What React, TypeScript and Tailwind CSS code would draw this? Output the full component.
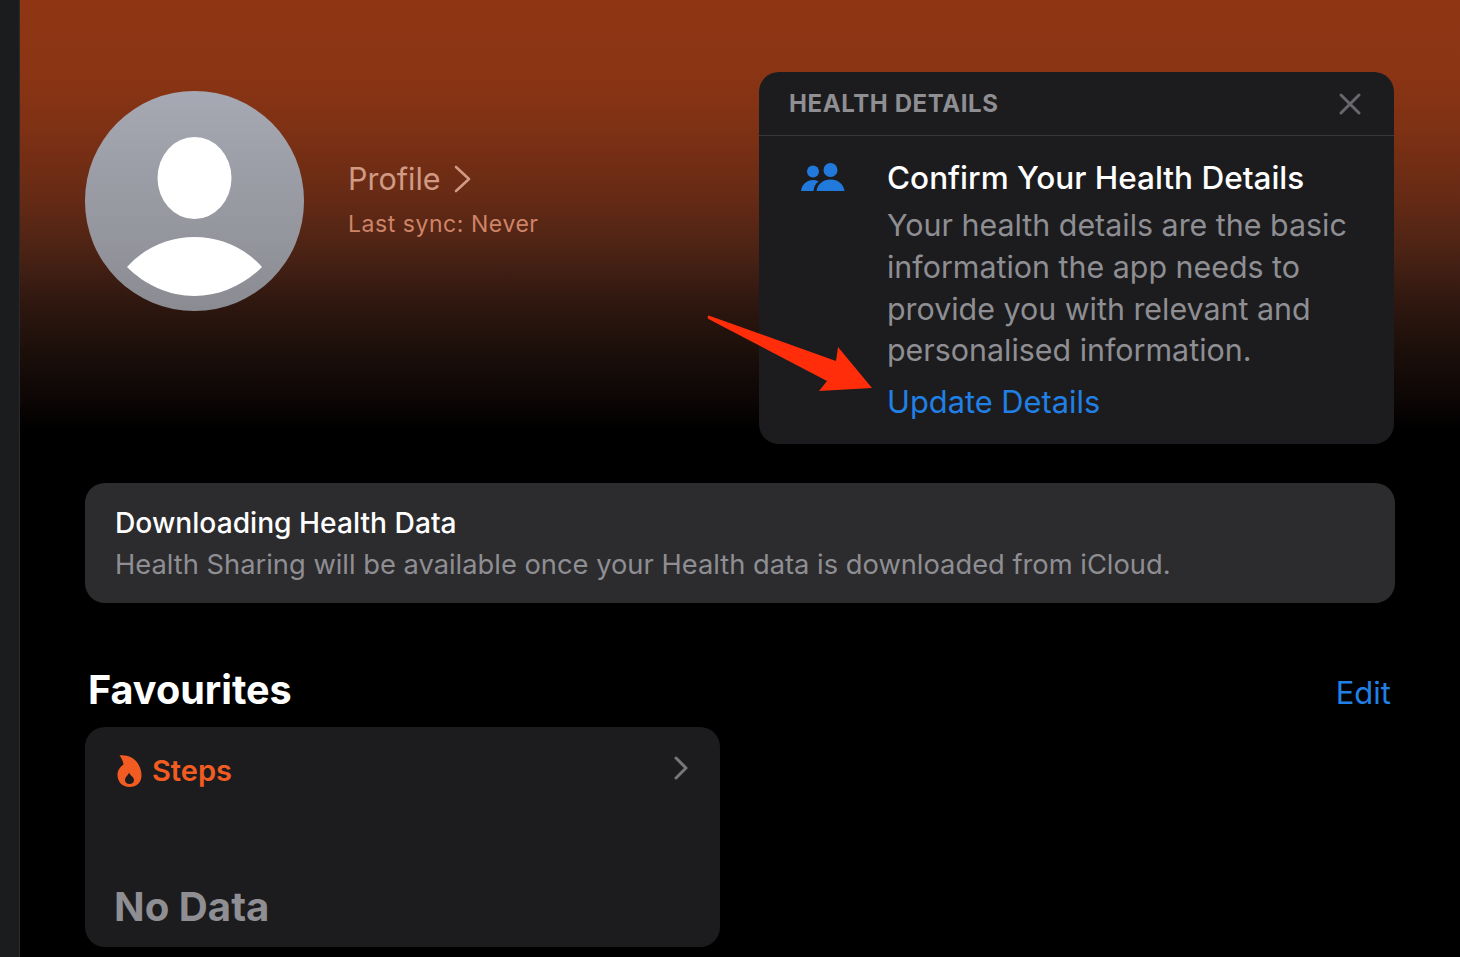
export default function App() {
  return (
    <div className="flex h-[957px] w-[1460px] overflow-hidden bg-black font-['Inter',sans-serif]">
      <div className="h-full w-[20px] shrink-0 border-r border-[#2a2a2c] bg-[#1b1c1e]" />
      <main className="relative flex-1 bg-[linear-gradient(180deg,#8f3513_0px,#8b3514_70px,#7e3114_130px,#652a15_200px,#4c2315_250px,#301810_300px,#1c0f0a_350px,#0c0605_400px,#000000_430px)] pl-[65px] pr-[65px]">
        <div className="flex items-start justify-between pt-[72px]">
          <div className="flex items-center pt-[19px]">
            <div className="relative h-[220px] w-[219px] overflow-hidden rounded-full bg-[linear-gradient(180deg,#a6a8b3_0%,#8b8c92_100%)]">
              <svg viewBox="0 0 219 220" className="absolute inset-0 h-full w-full">
                <ellipse cx="109.500" cy="87" rx="37" ry="41" fill="#ffffff" />
                <path d="M42 176 C60 156 84 146 109.500 146 C135 146 159 156 177 176 C159 194 135 205 109.500 205 C84 205 60 194 42 176 Z" fill="#ffffff" />
              </svg>
            </div>
            <div className="ml-[44px] flex flex-col pb-[4px]">
              <div className="flex items-center gap-[13px] text-[30.500px] leading-[40px] text-[#d09a84]">
                <span>Profile</span>
                <svg width="18" height="28" viewBox="0 0 18 28" fill="none" stroke="#d09a84" strokeWidth="2.6" strokeLinecap="round" strokeLinejoin="round">
                  <path d="M2 2 L15 14 L2 26" />
                </svg>
              </div>
              <div className="mt-[10px] text-[23px] leading-[30px] tracking-[0.55px] text-[#cf8468]">Last sync: Never</div>
            </div>
          </div>
          <section className="mr-[1px] h-[372px] w-[635px] rounded-[20px] bg-[#1c1c1e]">
            <div className="flex h-[64px] items-center justify-between border-b border-[#38383a] pl-[30px] pr-[32px]">
              <span className="text-[24px] font-bold tracking-[0.6px] text-[#8e8e93]">HEALTH DETAILS</span>
              <svg width="24" height="24" viewBox="0 0 24 24" fill="none" stroke="#68686c" strokeWidth="3" strokeLinecap="round">
                <path d="M3 3 L21 21 M21 3 L3 21" />
              </svg>
            </div>
            <div className="flex pl-[41px] pt-[21px]">
              <svg width="46" height="32" viewBox="0 0 46 32" fill="#2279dc" className="mt-[5px] shrink-0">
                <circle cx="13" cy="9.500" r="6" />
                <circle cx="30.500" cy="8" r="7" />
                <path d="M1 29 C2 22 7 18 13 18 C15 18 17 18.500 18.500 19.500 C15 22 14 25 13.500 29 Z" />
                <path d="M16.500 29 C17.500 22 23 17.500 30.500 17.500 C38 17.500 43.500 22 44.500 29 Z" />
              </svg>
              <div className="ml-[41px] flex flex-col">
                <h2 className="text-[31.500px] font-medium leading-[42px] text-white">Confirm Your Health Details</h2>
                <p className="mt-[6px] w-[480px] text-[30.400px] leading-[41.800px] text-[#8e8e93]">
                  Your health details are the basic
                  <br />
                  information the app needs to
                  <br />
                  provide you with relevant and
                  <br />
                  personalised information.
                </p>
                <a className="mt-[9px] text-[30.800px] leading-[42px] text-[#2180e6]">Update Details</a>
              </div>
            </div>
          </section>
        </div>
        <section className="mt-[39px] h-[120px] w-[1310px] rounded-[20px] bg-[#2c2c2e] pl-[30px] pt-[21px]">
          <h3 className="text-[28.200px] font-medium leading-[38px] text-white">Downloading Health Data</h3>
          <p className="mt-[4px] text-[27.300px] leading-[38px] text-[#8e8e93]">Health Sharing will be available once your Health data is downloaded from iCloud.</p>
        </section>
        <div className="mb-[5px] mt-[55px] flex h-[64px] items-center justify-between pl-[3px] pr-[4px]">
          <h2 className="mt-[2px] text-[39.600px] font-bold text-white">Favourites</h2>
          <a className="mt-[6px] text-[31px] text-[#2180e6]">Edit</a>
        </div>
        <section className="h-[220px] w-[635px] rounded-[20px] bg-[#1c1c1e] pl-[32px] pr-[31px]">
          <div className="flex items-center justify-between pt-[22px]">
            <div className="flex items-center gap-[10px]">
              <svg width="25" height="34" viewBox="0 0 25 34" className="shrink-0">
                <path fill="#f25c22" fillRule="evenodd" d="M2.500 1.500 C10 0.500 18 4 21.500 10.500 C23.500 14 24.500 18 24.500 21.500 C24.500 28.500 19.500 33 12.500 33 C5.500 33 0.500 28 0.500 21 C0.500 16.500 3 13 6.500 10.500 C6 7 4.500 4 2.500 1.500 Z M12 18.500 C11.500 21 8 23 8 26 C8 28.500 10 30 12.500 30 C15 30 17 28.500 17 26 C17 23 13 21.500 12 18.500 Z" />
              </svg>
              <span className="text-[29px] font-semibold text-[#f25c22]">Steps</span>
            </div>
            <svg width="16" height="24" viewBox="0 0 16 24" fill="none" stroke="#77777b" strokeWidth="3" strokeLinecap="round" strokeLinejoin="round" className="-mt-[6px]">
              <path d="M3 2 L13 12 L3 22" />
            </svg>
          </div>
          <div className="-ml-[3px] mt-[90px] text-[40.200px] font-bold leading-[48px] text-[#8e8e93]">No Data</div>
        </section>
        <svg width="180" height="90" viewBox="0 0 180 90" className="pointer-events-none absolute left-[680px] top-[310px]">
          <path fill="#ff2d0a" d="M8 6 C8.500 5.500 9.500 5.800 10 6 L136 51 L138 37 L172 78 L119 81 L127 71 L8.500 9 C7.500 8.500 7.500 6.500 8 6 Z" />
        </svg>
      </main>
    </div>
  );
}
